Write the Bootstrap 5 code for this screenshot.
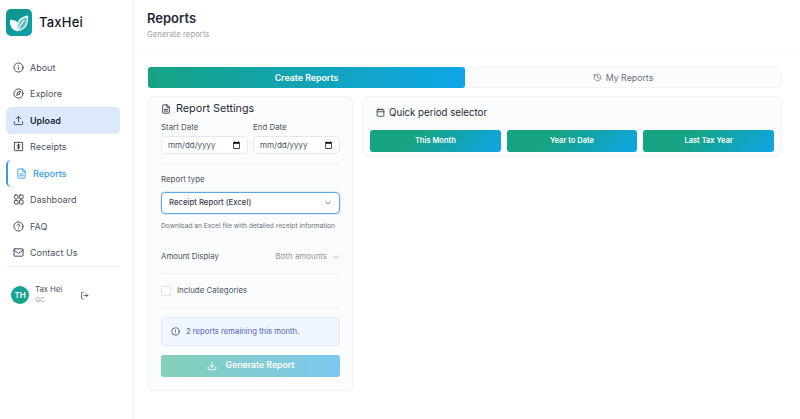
<!DOCTYPE html>
<html lang="en">
<head>
    <meta charset="UTF-8">
    <meta name="viewport" content="width=device-width, initial-scale=1.0">
    <title>TaxHei - Reports</title>
    <link rel="stylesheet" href="https://cdn.jsdelivr.net/npm/bootstrap@5.3.0/dist/css/bootstrap.min.css">
    <style>
        html, body { height: 100%; }
        body { font-family: Inter, "Liberation Sans", sans-serif; font-size: 9px; color: #1f2937; background: #fff; overflow: hidden; }
        svg { display: block; flex: none; fill: none; stroke: currentColor; stroke-width: 2; stroke-linecap: round; stroke-linejoin: round; }

        .app-shell { height: 419px; }
        .side-bar { width: 134px; flex: none; border-right: 1px solid #f1f3f5; padding: 9px 13px 0 6px; }
        .brand-logo { width: 26px; height: 27px; border-radius: 5px; background: linear-gradient(135deg, #0d9488, #12a0ae); }
        .brand-name { font-size: 13px; font-weight: 500; color: #111827; letter-spacing: .2px; margin-left: 7px; }
        .side-menu { margin-top: 18px; }
        .side-link { height: 26.5px; padding-left: 7px; gap: 6px; color: #4b5563; font-size: 9px; border-radius: 5px; text-decoration: none; }
        .side-link svg { color: #374151; }
        .side-link.is-upload { background: #dbe9fb; color: #1f2937; font-weight: 600; }
        .side-link.is-current { color: #3b9ae6; border-left: 2px solid #3b9ae6; padding-left: 8px; font-weight: 500; }
        .side-link.is-current svg { color: #3b9ae6; }
        .side-rule { border-top: 1px solid #eef0f2; margin-left: 1px; }
        .user-row { padding: 18px 0 0 5px; }
        .user-badge { width: 18px; height: 18px; flex: none; border-radius: 50%; background: linear-gradient(135deg, #0ea5a0, #16a37f); color: #fff; font-size: 8px; font-weight: 600; }
        .user-text { margin-left: 6px; }
        .user-name { font-size: 7.7px; color: #4b5563; line-height: 10px; }
        .user-org { font-size: 6.5px; color: #9ca3af; line-height: 9px; margin-top: 1px; }
        .user-exit { margin-left: 18px; color: #374151; }

        .page-head { height: 53px; padding: 10px 13px; border-bottom: 1px solid #f8f9fa; }
        .page-title { font-size: 13px; font-weight: 600; color: #1f2937; line-height: 17px; margin: 0; }
        .page-sub { font-size: 7.8px; color: #9ca3af; margin-top: 2px; line-height: 11px; }
        .page-body { padding: 14px 18px 0 14px; }

        .tab-strip { height: 21px; margin-bottom: 8px; background: #fbfcfd; border: 1px solid #f1f3f5; border-radius: 5px; }
        .tab-on { width: 317px; margin: -1px 0 -1px -1px; flex: none; border-radius: 3px; background: linear-gradient(90deg, #16a383, #0ea5e9); color: #fff; font-size: 8.8px; font-weight: 600; }
        .tab-off { color: #6b7280; font-size: 8.8px; gap: 4px; }

        .panel-row { gap: 9px; }
        .panel-box { background: #fbfcfd; border: 1px solid #f1f3f5; border-radius: 5px; box-shadow: 0 1px 2px rgba(0, 0, 0, .02); }
        .settings-box { width: 205px; flex: none; height: 295px; padding: 4px 12px 0; }
        .quick-box { height: 60px; padding: 7.5px 7px 0 7px; }
        .box-title { font-size: 10.8px; color: #1f2937; line-height: 15px; gap: 5px; margin-bottom: 6px; }
        .quick-title { font-size: 9.7px; gap: 4px; padding-left: 6px; margin-bottom: 10px; }
        .field-label { font-size: 7.9px; color: #4b5563; line-height: 11px; margin-bottom: 3px; }
        .date-box { width: 87px; height: 18px; padding: 0 6px; font-size: 8px; color: #4b5563; background: #fff; border: 1px solid #e5e7eb; border-radius: 5px; font-family: inherit; }
        .date-box::-webkit-calendar-picker-indicator { width: 9px; height: 9px; margin: 0; padding: 0; }
        .box-rule { border-top: 1px solid #f1f3f5; }
        .rule-dates { margin: 9px 0 10px; }
        .label-type { margin-bottom: 7px; }
        .type-select { height: 22px; padding: 0 7px; font-size: 7.75px; font-weight: 500; color: #374151; border: 1.5px solid #60a5e8; border-radius: 4px; background-color: #fff; background-image: url("data:image/svg+xml,%3csvg xmlns='http://www.w3.org/2000/svg' viewBox='0 0 16 16'%3e%3cpath fill='none' stroke='%236b7280' stroke-linecap='round' stroke-linejoin='round' stroke-width='1.5' d='m3 5 5 5 5-5'/%3e%3c/svg%3e"); background-position: right 7px center; background-size: 8px 8px; box-shadow: 0 0 0 1px #e0edfb; }
        .hint-text { font-size: 6.65px; color: #6b7280; line-height: 10px; margin-top: 7px; margin-bottom: 10px; white-space: nowrap; }
        .amount-row { height: 32px; font-size: 7.8px; color: #4b5563; }
        .amount-val { color: #8f96a1; font-size: 7.9px; gap: 5px; }
        .tick-row { height: 33px; gap: 6px; }
        .tick-box { width: 10px; height: 10px; border: 1px solid #e0e3e7; border-radius: 2px; background: #fff; }
        .note-box { height: 29px; margin-top: 9px; padding-left: 9px; gap: 6px; font-size: 7.7px; color: #4f5fb0; background: #eff6ff; border: 1px solid #e0ecfb; border-radius: 4px; }
        .note-box svg { color: #374151; }
        .make-btn { height: 22px; margin-top: 9px; border-radius: 3px; background: linear-gradient(90deg, #84d0b8, #7cc8f0); color: #fff; font-size: 8.7px; font-weight: 600; gap: 9px; border: 0; width: 100%; }
        .period-row { gap: 6px; }
        .period-btn { height: 22px; border-radius: 3px; border: 0; color: #fff; font-size: 7.5px; font-weight: 600; background: linear-gradient(135deg, #16a383 35%, #0ea5e9); padding: 0; }
    </style>
</head>
<body>

<div class="d-flex app-shell">
    <!-- Sidebar -->
    <aside class="side-bar">
        <div class="d-flex align-items-center">
            <div class="brand-logo d-flex align-items-center justify-content-center">
                <svg width="20" height="20" viewBox="0 0 24 24" stroke-width="1"><path d="M10 21C5 20 2 16 2 9c4 0 7 1.500 8.500 4.500" fill="#fff" stroke="#fff"/><path d="M10 21c-1-9 3-15 12-17 .5 9-3 16-12 17zM11 20c1.500-4 4-8 7-11" fill="#fff" fill-opacity=".3" stroke="#d7f3ef"/></svg>
            </div>
            <span class="brand-name">TaxHei</span>
        </div>

        <nav class="side-menu d-flex flex-column">
            <a class="side-link d-flex align-items-center" href="#">
                <svg width="11" height="11" viewBox="0 0 24 24"><circle cx="12" cy="12" r="10"/><path d="M12 16v-4M12 8h.01"/></svg>About
            </a>
            <a class="side-link d-flex align-items-center" href="#">
                <svg width="11" height="11" viewBox="0 0 24 24"><circle cx="12" cy="12" r="10"/><path d="M16 8l-2 6-6 2 2-6z"/></svg>Explore
            </a>
            <a class="side-link is-upload d-flex align-items-center" href="#">
                <svg width="11" height="11" viewBox="0 0 24 24"><path d="M3 15v4a2 2 0 0 0 2 2h14a2 2 0 0 0 2-2v-4M17 8l-5-5-5 5M12 3v12"/></svg>Upload
            </a>
            <a class="side-link d-flex align-items-center" href="#">
                <svg width="11" height="11" viewBox="0 0 24 24"><rect x="3" y="3" width="18" height="18" rx="1"/><path d="M15 8.500h-4a1.700 1.700 0 0 0 0 3.500h2a1.700 1.700 0 0 1 0 3.500H9M12 6.500v11"/></svg>Receipts
            </a>
            <a class="side-link is-current d-flex align-items-center" href="#">
                <svg width="11" height="11" viewBox="0 0 24 24"><path d="M14 2H6a2 2 0 0 0-2 2v16a2 2 0 0 0 2 2h12a2 2 0 0 0 2-2V8z"/><path d="M14 2v6h6M8 13h8M8 17h8"/></svg>Reports
            </a>
            <a class="side-link d-flex align-items-center" href="#">
                <svg width="11" height="11" viewBox="0 0 24 24" stroke-width="1.800"><rect x="3" y="2" width="8" height="9" rx="3"/><rect x="14" y="2" width="8" height="8" rx="2"/><rect x="3" y="14" width="8" height="8" rx="2"/><rect x="14" y="13" width="8" height="9" rx="2"/></svg>Dashboard
            </a>
            <a class="side-link d-flex align-items-center" href="#">
                <svg width="11" height="11" viewBox="0 0 24 24"><circle cx="12" cy="12" r="10"/><path d="M9.100 9a3 3 0 0 1 5.800 1c0 2-3 3-3 3M12 17h.01"/></svg>FAQ
            </a>
            <a class="side-link d-flex align-items-center" href="#">
                <svg width="11" height="11" viewBox="0 0 24 24"><rect x="2" y="4" width="20" height="16" rx="2"/><path d="M2 7l10 7 10-7"/></svg>Contact Us
            </a>
        </nav>
        <div class="side-rule"></div>

        <div class="user-row d-flex align-items-center">
            <div class="user-badge d-flex align-items-center justify-content-center">TH</div>
            <div class="user-text">
                <div class="user-name">Tax Hei</div>
                <div class="user-org">QC</div>
            </div>
            <svg class="user-exit" width="9" height="9" viewBox="0 0 24 24"><path d="M9 3H6a2 2 0 0 0-2 2v14a2 2 0 0 0 2 2h3M16 17l5-5-5-5M21 12H10"/></svg>
        </div>
    </aside>

    <!-- Main -->
    <main class="flex-grow-1">
        <header class="page-head">
            <h1 class="page-title">Reports</h1>
            <div class="page-sub">Generate reports</div>
        </header>

        <div class="page-body">
            <div class="tab-strip d-flex">
                <div class="tab-on d-flex align-items-center justify-content-center">Create Reports</div>
                <div class="tab-off flex-grow-1 d-flex align-items-center justify-content-center">
                    <svg width="9" height="9" viewBox="0 0 24 24"><path d="M3 12a9 9 0 1 0 3-6.700L3 8"/><path d="M3 3v5h5M12 7v5l4 2"/></svg>My Reports
                </div>
            </div>

            <div class="panel-row d-flex align-items-start">
                <!-- Report settings -->
                <section class="panel-box settings-box">
                    <div class="box-title d-flex align-items-center">
                        <svg width="10" height="10" viewBox="0 0 24 24"><path d="M14 2H6a2 2 0 0 0-2 2v16a2 2 0 0 0 2 2h12a2 2 0 0 0 2-2V8z"/><path d="M14 2v6h6M8 13h8M8 17h8"/></svg>Report Settings
                    </div>
                    <div class="d-flex justify-content-between">
                        <div>
                            <div class="field-label">Start Date</div>
                            <input type="date" class="date-box">
                        </div>
                        <div>
                            <div class="field-label">End Date</div>
                            <input type="date" class="date-box">
                        </div>
                    </div>
                    <div class="box-rule rule-dates"></div>
                    <div class="field-label label-type">Report type</div>
                    <select class="form-select type-select">
                        <option>Receipt Report (Excel)</option>
                    </select>
                    <div class="hint-text">Download an Excel file with detailed receipt information</div>
                    <div class="amount-row d-flex align-items-center justify-content-between">
                        <span>Amount Display</span>
                        <span class="amount-val d-flex align-items-center">Both amounts
                            <svg width="8" height="8" viewBox="0 0 24 24"><path d="M6 9l6 6 6-6"/></svg>
                        </span>
                    </div>
                    <div class="box-rule"></div>
                    <div class="tick-row d-flex align-items-center">
                        <span class="tick-box"></span>
                        <span class="field-label mb-0">Include Categories</span>
                    </div>
                    <div class="box-rule"></div>
                    <div class="note-box d-flex align-items-center">
                        <svg width="9" height="9" viewBox="0 0 24 24"><circle cx="12" cy="12" r="10"/><path d="M12 8v4M12 16h.01"/></svg>
                        2 reports remaining this month.
                    </div>
                    <button class="make-btn d-flex align-items-center justify-content-center">
                        <svg width="10" height="10" viewBox="0 0 24 24"><path d="M3 15v4a2 2 0 0 0 2 2h14a2 2 0 0 0 2-2v-4M7 10l5 5 5-5M12 15V3"/></svg>Generate Report
                    </button>
                </section>

                <!-- Quick period -->
                <section class="panel-box quick-box flex-grow-1">
                    <div class="box-title quick-title d-flex align-items-center">
                        <svg width="9" height="9" viewBox="0 0 24 24"><rect x="3" y="4" width="18" height="18" rx="2"/><path d="M16 2v4M8 2v4M3 10h18"/></svg>Quick period selector
                    </div>
                    <div class="period-row d-flex">
                        <button class="period-btn flex-fill w-100">This Month</button>
                        <button class="period-btn flex-fill w-100">Year to Date</button>
                        <button class="period-btn flex-fill w-100">Last Tax Year</button>
                    </div>
                </section>
            </div>
        </div>
    </main>
</div>

<script src="https://cdn.jsdelivr.net/npm/bootstrap@5.3.0/dist/js/bootstrap.bundle.min.js"></script>
</body>
</html>
